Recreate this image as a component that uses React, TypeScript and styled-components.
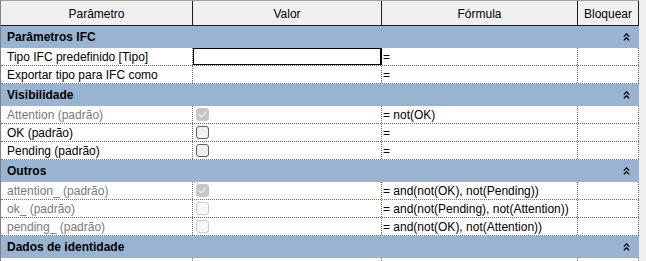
import styled, { createGlobalStyle } from "styled-components";

const GlobalStyle = createGlobalStyle`
	html, body {
		margin: 0;
		padding: 0;
		background: #ffffff;
		overflow: hidden;
	}
	* {
		box-sizing: border-box;
	}
`;

const COLS = "192px 189px 196px 61px";

const Page = styled.div`
	display: flex;
	width: 100%;
	height: 100vh;
	overflow: hidden;
	font-family: "Segoe UI", "Liberation Sans", Arial, sans-serif;
	font-size: 12px;
	color: #000;
`;

const Table = styled.div`
	width: 639px;
	flex-shrink: 0;
	border-top: 1px solid #a0a0a0;
	border-left: 1px solid #828282;
`;

const ScrollStrip = styled.div`
	flex: 1;
	background: #f0f0f0;
`;

const HeaderRow = styled.div`
	display: grid;
	grid-template-columns: ${COLS};
	height: 25px;
	background: #f0f0f0;
	border-bottom: 1px solid #1e1e1e;
`;

const HeaderCell = styled.div`
	display: flex;
	align-items: center;
	justify-content: center;
	border-right: 1px solid #1e1e1e;
	padding-top: 1px;
`;

const GroupRow = styled.div`
	height: 22px;
	background: #99b4d1;
	display: flex;
	align-items: center;
	justify-content: space-between;
	padding: 0 9px 0 6px;
	font-weight: bold;
`;

const Row = styled.div`
	display: grid;
	grid-template-columns: ${COLS};
	height: 18px;
	border-bottom: 1px dotted #6e6e6e;
`;

const Cell = styled.div<{ $muted?: boolean; $pad?: number }>`
	display: flex;
	align-items: center;
	border-right: 1px dotted #6e6e6e;
	padding-left: ${(p) => p.$pad ?? 0}px;
	color: ${(p) => (p.$muted ? "#7a7a7a" : "#000")};
	white-space: nowrap;
	overflow: hidden;
`;

const EditBox = styled.div`
	width: 100%;
	height: 100%;
	border: 1px solid #000;
	background: #fff;
`;

const EditCell = styled(Cell)`
	border-right: 1px solid #000;
`;

const Check = styled.div<{ $state: "on-disabled" | "off" | "off-disabled" }>`
	width: 13px;
	height: 13px;
	margin-left: 3px;
	border-radius: 3px;
	display: flex;
	align-items: center;
	justify-content: center;
	border: 1px solid
		${(p) => (p.$state === "off" ? "#5f5f5f" : p.$state === "off-disabled" ? "#cccccc" : "#c6c6c6")};
	background: ${(p) => (p.$state === "off" ? "#f0f0f0" : p.$state === "off-disabled" ? "#f7f7f7" : "#c6c6c6")};
`;

type ValueKind = "edit" | "none" | "on-disabled" | "off" | "off-disabled";

interface Param {
	name: string;
	value: ValueKind;
	formula: string;
	muted?: boolean;
}

interface Group {
	title: string;
	rows: Param[];
}

const groups: Group[] = [
	{
		title: "Parâmetros IFC",
		rows: [
			{ name: "Tipo IFC predefinido [Tipo]", value: "edit", formula: "=" },
			{ name: "Exportar tipo para IFC como", value: "none", formula: "=" },
		],
	},
	{
		title: "Visibilidade",
		rows: [
			{ name: "Attention (padrão)", value: "on-disabled", formula: "= not(OK)", muted: true },
			{ name: "OK (padrão)", value: "off", formula: "=" },
			{ name: "Pending (padrão)", value: "off", formula: "=" },
		],
	},
	{
		title: "Outros",
		rows: [
			{ name: "attention_ (padrão)", value: "on-disabled", formula: "= and(not(OK), not(Pending))", muted: true },
			{ name: "ok_ (padrão)", value: "off-disabled", formula: "= and(not(Pending), not(Attention))", muted: true },
			{ name: "pending_ (padrão)", value: "off-disabled", formula: "= and(not(OK), not(Attention))", muted: true },
		],
	},
	{
		title: "Dados de identidade",
		rows: [{ name: "", value: "none", formula: "" }],
	},
];

function CollapseIcon() {
	return (
		<svg width="7" height="8" viewBox="0 0 7 8">
			<polyline points="0.8,3.6 3.5,0.9 6.2,3.6" fill="none" stroke="#000" strokeWidth="1.3" />
			<polyline points="0.8,7.4 3.5,4.7 6.2,7.4" fill="none" stroke="#000" strokeWidth="1.3" />
		</svg>
	);
}

function Value({ kind }: { kind: ValueKind }) {
	if (kind === "edit") {
		return (
			<EditCell>
				<EditBox />
			</EditCell>
		);
	}
	if (kind === "none") return <Cell />;
	return (
		<Cell>
			<Check $state={kind}>
				{kind === "on-disabled" && (
					<svg width="9" height="7" viewBox="0 0 9 7">
						<polyline points="1,3.5 3.3,5.8 8,1.2" fill="none" stroke="#ececec" strokeWidth="1.2" />
					</svg>
				)}
			</Check>
		</Cell>
	);
}

export default function App() {
	return (
		<Page>
			<GlobalStyle />
			<Table>
				<HeaderRow>
					<HeaderCell>Parâmetro</HeaderCell>
					<HeaderCell>Valor</HeaderCell>
					<HeaderCell>Fórmula</HeaderCell>
					<HeaderCell>Bloquear</HeaderCell>
				</HeaderRow>
				{groups.map((g) => (
					<div key={g.title}>
						<GroupRow>
							<span>{g.title}</span>
							<CollapseIcon />
						</GroupRow>
						{g.rows.map((r, i) => (
							<Row key={i}>
								<Cell $pad={6} $muted={r.muted}>
									{r.name}
								</Cell>
								<Value kind={r.value} />
								<Cell $pad={1}>{r.formula}</Cell>
								<Cell />
							</Row>
						))}
					</div>
				))}
			</Table>
			<ScrollStrip />
		</Page>
	);
}
